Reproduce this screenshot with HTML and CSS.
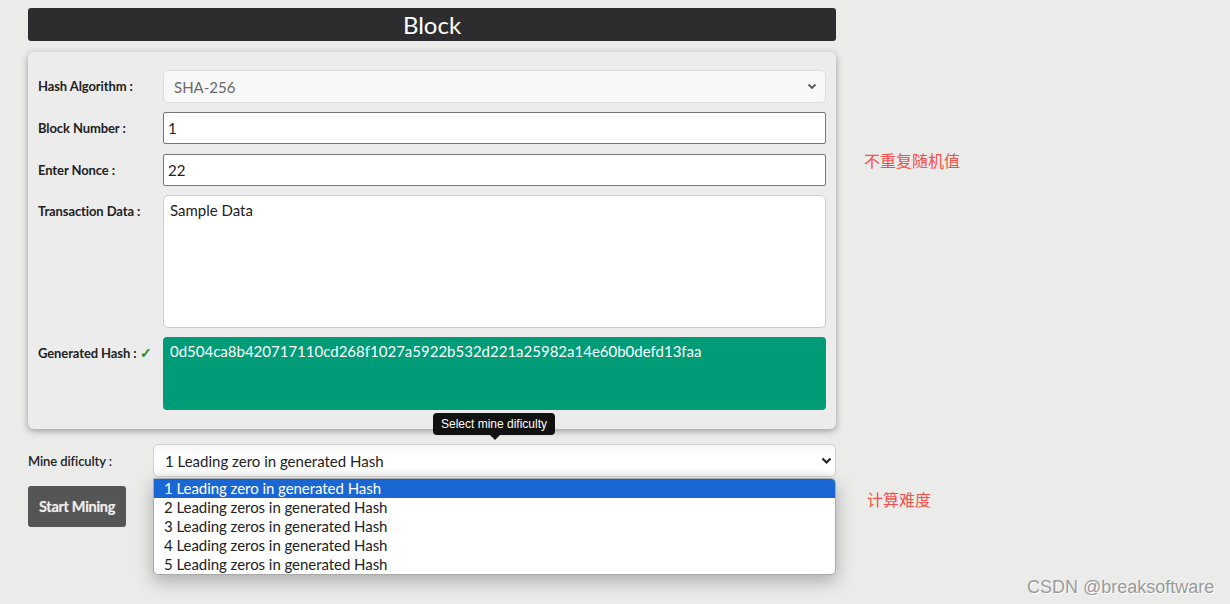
FILE: index.html
```html
<!DOCTYPE html>
<html>
<head>
<meta charset="utf-8">
<link rel="stylesheet" href="styles.css">
</head>
<body>
<div class="page">
  <div class="main">
    <div class="title">Block</div>
    <div class="card">
      <div class="row">
        <div class="label">Hash Algorithm :</div>
        <div class="select algo"><span>SHA-256</span>
          <svg class="chev" width="10" height="7" viewBox="0 0 10 7"><path d="M1.5 1.5 L5 5 L8.5 1.5" fill="none" stroke="#555" stroke-width="1.8"/></svg>
        </div>
      </div>
      <div class="row">
        <div class="label">Block Number :</div>
        <input class="field" type="text" value="1">
      </div>
      <div class="row">
        <div class="label">Enter Nonce :</div>
        <input class="field" type="text" value="22">
      </div>
      <div class="row">
        <div class="label">Transaction Data :</div>
        <textarea class="area">Sample Data</textarea>
      </div>
      <div class="row">
        <div class="label">Generated Hash : <span class="check">✓</span></div>
        <div class="hash">0d504ca8b420717110cd268f1027a5922b532d221a25982a14e60b0defd13faa</div>
      </div>
    </div>
    <div class="mine-row">
      <div class="label mine-label">Mine dificulty :</div>
      <div class="mine-wrap">
        <div class="tooltip">Select mine dificulty</div>
        <div class="select mine"><span>1 Leading zero in generated Hash</span>
          <svg class="chev" width="11" height="8" viewBox="0 0 11 8"><path d="M1.5 1.5 L5.5 5.5 L9.5 1.5" fill="none" stroke="#222" stroke-width="2.2"/></svg>
        </div>
        <div class="dropdown">
          <div class="opt active">1 Leading zero in generated Hash</div>
          <div class="opt">2 Leading zeros in generated Hash</div>
          <div class="opt">3 Leading zeros in generated Hash</div>
          <div class="opt">4 Leading zeros in generated Hash</div>
          <div class="opt">5 Leading zeros in generated Hash</div>
        </div>
      </div>
    </div>
    <div class="btn-row">
      <button class="btn">Start Mining</button>
    </div>
  </div>
  <div class="note note1">不重复随机值</div>
  <div class="note note2">计算难度</div>
  <div class="watermark">CSDN @breaksoftware</div>
</div>
</body>
</html>
```
FILE: styles.css
```css
* { box-sizing: border-box; }
html, body { margin: 0; padding: 0; }
body {
  background: #ebebe9;
  font-family: Lato, "Noto Sans", sans-serif;
  color: #222;
  width: 1230px;
  height: 604px;
  overflow: hidden;
}
.page {
  position: relative;
  width: 1230px;
  height: 604px;
  padding: 8px 0 0 28px;
}
.main {
  width: 808px;
}
.title {
  height: 33px;
  background: #2d2d2f;
  border-radius: 3px;
  color: #fff;
  font-size: 24px;
  line-height: 33px;
  text-align: center;
}
.card {
  margin-top: 11px;
  background: #ececec;
  border-radius: 6px;
  box-shadow: 0 2px 7px rgba(0,0,0,0.35);
  padding: 18px 10px 19px 10px;
  display: flex;
  flex-direction: column;
  gap: 9px;
}
.row {
  display: grid;
  grid-template-columns: 125px 1fr;
  align-items: start;
}
.row:nth-child(3) { margin-top: 1px; }
.label {
  font-size: 13px;
  font-weight: 700;
  line-height: 16px;
  padding-top: 8px;
  color: #222;
  white-space: nowrap;
  letter-spacing: -0.1px;
}
.check { color: #2a8a2a; font-size: 14px; }
.select {
  display: flex;
  align-items: center;
  justify-content: space-between;
  border-radius: 5px;
  font-size: 15px;
}
.select.algo {
  height: 33px;
  background: #f8f8f8;
  border: 1px solid #dcdcdc;
  padding: 0 8px 0 10px;
  color: #6a6a6a;
}
.field {
  display: block;
  width: 100%;
  height: 32px;
  border: 1px solid #777;
  border-radius: 2px;
  background: #fff;
  font-family: Lato, sans-serif;
  font-size: 15px;
  color: #222;
  padding: 0 4px;
  margin: 0;
  outline: none;
}
.area {
  display: block;
  width: 100%;
  height: 133px;
  border: 1px solid #ccc;
  border-radius: 5px;
  background: #fff;
  font-family: Lato, sans-serif;
  font-size: 15px;
  line-height: 18px;
  color: #222;
  padding: 5px 6px;
  margin: 0;
  resize: none;
  outline: none;
}
.hash {
  height: 73px;
  background: #009b77;
  border-radius: 4px;
  color: #fff;
  font-size: 15px;
  line-height: 18px;
  padding: 5px 7px;
}
.mine-row {
  margin-top: 15px;
  display: grid;
  grid-template-columns: 125px 1fr;
  align-items: start;
}
.mine-label { font-weight: 600; padding-top: 9px; }
.mine-wrap { position: relative; }
.select.mine {
  height: 33px;
  background: linear-gradient(#f7f7f7, #fff 40%, #fff 80%, #f4f4f4);
  border: 1px solid #cfcfcf;
  padding: 0 3px 0 11px;
  color: #222;
}
.tooltip {
  position: absolute;
  left: 280px;
  top: -31px;
  background: #111;
  color: #fff;
  font-family: "Liberation Sans", Arial, sans-serif;
  font-size: 12px;
  line-height: 22px;
  height: 22px;
  padding: 0 8px;
  border-radius: 4px;
  white-space: nowrap;
}
.tooltip::after {
  content: "";
  position: absolute;
  left: 57px;
  top: 22px;
  border-left: 5px solid transparent;
  border-right: 5px solid transparent;
  border-top: 5px solid #111;
}
.dropdown {
  position: absolute;
  left: 0;
  top: 34px;
  width: 683px;
  background: #fff;
  border: 1px solid #aaa;
  border-radius: 0 5px 5px 5px;
  box-shadow: 0 6px 18px rgba(0,0,0,0.28);
  overflow: hidden;
  z-index: 5;
}
.opt {
  height: 19px;
  line-height: 19px;
  font-size: 15px;
  padding-left: 10px;
  color: #222;
  white-space: nowrap;
  letter-spacing: -0.05px;
}
.opt.active {
  background: #1a66d2;
  color: #fff;
}
.btn-row { margin-top: 9px; }
.btn {
  display: block;
  width: 98px;
  height: 41px;
  background: #555;
  border: none;
  border-radius: 3px;
  color: #ececec;
  font-family: Lato, sans-serif;
  font-weight: 700;
  font-size: 14.5px;
  letter-spacing: -0.3px;
  text-shadow: 0 0 1px rgba(255,255,255,0.5);
  padding: 0;
}
.note {
  position: absolute;
  color: #f2504b;
  font-family: "Noto Sans CJK SC", sans-serif;
  font-size: 16px;
  line-height: 20px;
}
.note1 { left: 864px; top: 150px; }
.note2 { left: 867px; top: 489px; }
.watermark {
  position: absolute;
  left: 1027px;
  top: 576px;
  font-family: "Liberation Sans", Arial, sans-serif;
  font-size: 18px;
  line-height: 22px;
  color: #9a9a9a;
  text-shadow: 1px 1px 0 #fff;
}
```
